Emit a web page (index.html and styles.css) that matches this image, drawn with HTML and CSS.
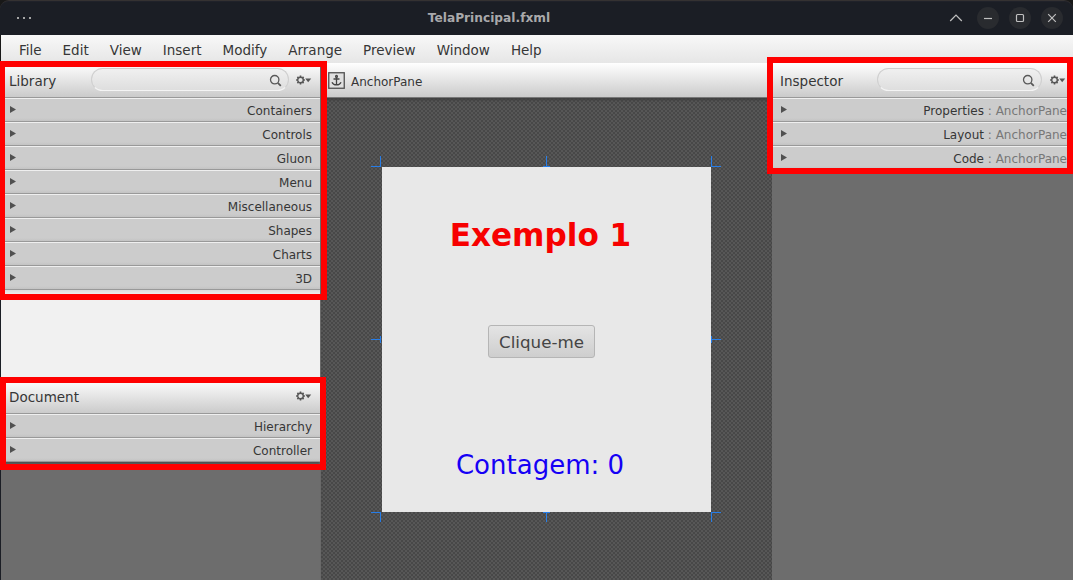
FILE: index.html
```html
<!DOCTYPE html>
<html lang="en">
<head>
<meta charset="utf-8">
<title>TelaPrincipal.fxml</title>
<link rel="stylesheet" href="styles.css">
</head>
<body>
<svg class="defs" width="0" height="0">
  <symbol id="search" viewBox="0 0 14 14"><circle cx="5.7" cy="5.7" r="4.2" fill="none" stroke="#595959" stroke-width="1.3"/><path d="M8.8 8.8l3 3" stroke="#595959" stroke-width="1.8"/></symbol>
  <symbol id="gear" viewBox="0 0 16 10"><circle cx="4.5" cy="5" r="2.8" fill="none" stroke="#555" stroke-width="1.4"/><path d="M4.5 .6v1.5M4.5 7.9v1.5M.1 5h1.5M7.4 5h1.5M1.4 1.9l1 1M6.6 7.1l1 1M1.4 8.1l1-1M6.6 2.9l1-1" stroke="#555" stroke-width="1.6"/><path d="M9.2 3.5h6L12.2 7.3z" fill="#555"/></symbol>
</svg>
<div class="window">
  <header class="titlebar">
    <span class="dots"><i></i><i></i><i></i></span>
    <h1 class="title">TelaPrincipal.fxml</h1>
    <div class="controls">
      <span class="ctl plain"><svg viewBox="0 0 22 22"><path d="M5.2 14L11 8l5.8 6"/></svg></span>
      <span class="ctl"><svg viewBox="0 0 22 22"><path d="M7 11.5h8"/></svg></span>
      <span class="ctl"><svg viewBox="0 0 22 22"><rect x="7.5" y="7.5" width="7" height="7" rx="1"/></svg></span>
      <span class="ctl"><svg viewBox="0 0 22 22"><path d="M7.2 7.2l7.6 7.6M14.8 7.2l-7.6 7.6"/></svg></span>
    </div>
  </header>
  <nav class="menubar"><span>File</span><span>Edit</span><span>View</span><span>Insert</span><span>Modify</span><span>Arrange</span><span>Preview</span><span>Window</span><span>Help</span></nav>
  <main class="workspace">
    <aside class="left">
      <section class="library">
        <div class="head"><h2>Library</h2><div class="search"><svg><use href="#search"/></svg></div><svg class="gear"><use href="#gear"/></svg></div>
        <div class="row"><i></i><span>Containers</span></div>
        <div class="row"><i></i><span>Controls</span></div>
        <div class="row"><i></i><span>Gluon</span></div>
        <div class="row"><i></i><span>Menu</span></div>
        <div class="row"><i></i><span>Miscellaneous</span></div>
        <div class="row"><i></i><span>Shapes</span></div>
        <div class="row"><i></i><span>Charts</span></div>
        <div class="row"><i></i><span>3D</span></div>
      </section>
      <section class="document">
        <div class="head"><h2>Document</h2><svg class="gear"><use href="#gear"/></svg></div>
        <div class="row"><i></i><span>Hierarchy</span></div>
        <div class="row"><i></i><span>Controller</span></div>
      </section>
    </aside>
    <section class="editor">
      <div class="crumb">
        <svg class="anchor" viewBox="0 0 17 17"><rect x=".75" y=".75" width="15.5" height="15.5" fill="#e0e0e0" stroke="#505050" stroke-width="1.3"/><circle cx="8.5" cy="4.4" r=".9"/><path d="M8.5 5.5V13M5.5 7h6M4 10.2c.8 2 2.2 2.7 4.5 2.7s3.7-.7 4.5-2.7"/></svg>
        <span>AnchorPane</span>
      </div>
      <div class="canvas">
        <div class="pane">
          <h3 class="heading">Exemplo 1</h3>
          <button class="btn">Clique-me</button>
          <p class="count">Contagem: 0</p>
          <svg class="handles" viewBox="0 0 350 366"><path d="M0 10.5h10M9.5 0v11M350 10.5h-10M340.5 0v11M172 10.5h7M175.5 0v10M0 183.5h10M9.5 180v7M350 183.5h-10M340.5 180v7M0 356.5h10M9.5 356v10M350 356.5h-10M340.5 356v10M172 356.5h7M175.5 356v10"/></svg>
        </div>
      </div>
    </section>
    <aside class="inspector">
      <div class="head"><h2>Inspector</h2><div class="search"><svg><use href="#search"/></svg></div><svg class="gear"><use href="#gear"/></svg></div>
      <div class="row"><i></i><span>Properties <em>: AnchorPane</em></span></div>
      <div class="row"><i></i><span>Layout <em>: AnchorPane</em></span></div>
      <div class="row"><i></i><span>Code <em>: AnchorPane</em></span></div>
    </aside>
  </main>
  <div class="mark mark-library"></div>
  <div class="mark mark-document"></div>
  <div class="mark mark-inspector"></div>
</div>
</body>
</html>
```
FILE: styles.css
```css
* { box-sizing: border-box; }
body { margin: 0; font-family: "DejaVu Sans", sans-serif; color: #363636; background: #181818; }
h1, h2, h3, p { margin: 0; font-weight: normal; }
.defs { position: absolute; }
.window { position: relative; width: 1073px; height: 580px; overflow: hidden; display: flex; flex-direction: column; }

.titlebar { height: 35px; flex: none; display: grid; grid-template-columns: 200px 578px 1fr; align-items: center; background: #1b1e25; border-top: 1px solid #353232; border-radius: 9px 9px 0 0; box-shadow: inset 0 1px #20222a; }
.dots { display: flex; gap: 4px; padding-left: 17px; }
.dots i { width: 2px; height: 2px; background: #a5a5a5; }
.title { text-align: center; font-size: 12.2px; line-height: 16px; font-weight: bold; color: #a9a9ab; }
.controls { display: flex; justify-content: flex-end; gap: 10px; padding-right: 10px; }
.ctl { width: 22px; height: 22px; border-radius: 50%; background: #292b2f; }
.ctl.plain { background: none; }
.ctl svg { display: block; width: 22px; height: 22px; fill: none; stroke: #c0c0c0; stroke-width: 1.2; }

.menubar { height: 28px; flex: none; display: flex; gap: 21px; padding: 1px 0 0 18px; margin-left: 1px; font-size: 13.5px; line-height: 28px; background: linear-gradient(#f8f8f8, #e6e6e6); }
.workspace { flex: 1; display: grid; grid-template-columns: 321px 451px 301px; }

.left { display: flex; flex-direction: column; border-left: 1px solid #1b1e25; border-right: 1px solid #696969; background: #6d6d6d; }
.library { height: 316px; background: linear-gradient(#ddd, #f1f1f1 5px) 0 227px no-repeat #f1f1f1; }
.document { box-shadow: 0 2px 2px #505050; }
.head { height: 35px; display: flex; align-items: center; padding: 0 8px; background: linear-gradient(#fff, #cbcbcb); border-bottom: 1px solid #999; }
.head h2 { flex: 1; font-size: 13.5px; line-height: 18px; padding-top: 2px; }
.document .head h2 { padding-top: 1px; }
.search { width: 198px; height: 23px; margin: -2px 7px 0 0; display: flex; align-items: center; justify-content: flex-end; padding-right: 5px; border: 1px solid #cfcfcf; border-bottom-color: #f4f4f4; border-radius: 12px; background: linear-gradient(#f0f0f0, #dedede); }
.search svg { width: 14px; height: 14px; margin-top: 3px; }
.gear { width: 16px; height: 10px; }
.row { height: 24px; display: flex; justify-content: space-between; padding: 0 8px 0 9px; background: linear-gradient(#ccc 19px, #c3c3c3); border-top: 1px solid #efefef; border-bottom: 1px solid #999; font-size: 12px; line-height: 24px; white-space: pre; }
.row i { width: 6px; height: 7px; margin-top: 7px; background: #505050; clip-path: polygon(0 0, 100% 50%, 0 100%); }
.row em { font-style: normal; color: #777; }

.editor { display: flex; flex-direction: column; min-width: 0; }
.crumb { height: 35px; flex: none; display: flex; align-items: center; gap: 6px; padding-left: 7px; font-size: 12px; background: linear-gradient(#fff, #cbcbcb); border-bottom: 1px solid #777; }
.crumb span { padding-top: 3px; }
.anchor { width: 17px; height: 17px; fill: none; stroke: #444; stroke-width: 1.3; }
.canvas { flex: 1; padding: 69px 0 0 61px; background: repeating-conic-gradient(#484848 0 25%, #575757 0 50%) 0 0 / 4px 4px; box-shadow: inset 0 3px 3px -1px #404040; }
.pane { position: relative; width: 329px; height: 345px; display: flex; flex-direction: column; align-items: center; background: #e8e8e8; }
.heading { margin-top: 48px; padding-right: 12px; font-size: 31.1px; line-height: 40px; font-weight: bold; color: #f70000; }
.btn { width: 107px; height: 33px; margin: 70px 10px 0 0; padding: 2px 0 0; font: 16.7px/29px "DejaVu Sans", sans-serif; color: #444; background: linear-gradient(#e4e4e4, #cecece); border: 1px solid #b5b5b5; border-radius: 3px; }
.count { margin-top: 91px; padding-right: 13px; font-size: 26px; line-height: 32px; color: #1500f5; }
.handles { position: absolute; left: -11px; top: -11px; width: 350px; height: 366px; fill: none; stroke: #267de8; }

.inspector { background: #6d6d6d; }
.inspector .search { width: 165px; margin-right: 8px; }
.inspector .head { padding-right: 7px; }
.inspector .row { padding-right: 6px; }

.mark { position: absolute; border: 6px solid #f00; }
.mark-library { left: 0; top: 61px; width: 327px; height: 239px; border-left-width: 5px; }
.mark-document { left: 0; top: 377px; width: 326px; height: 93px; }
.mark-inspector { left: 767px; top: 57px; width: 306px; height: 117px; }
```
